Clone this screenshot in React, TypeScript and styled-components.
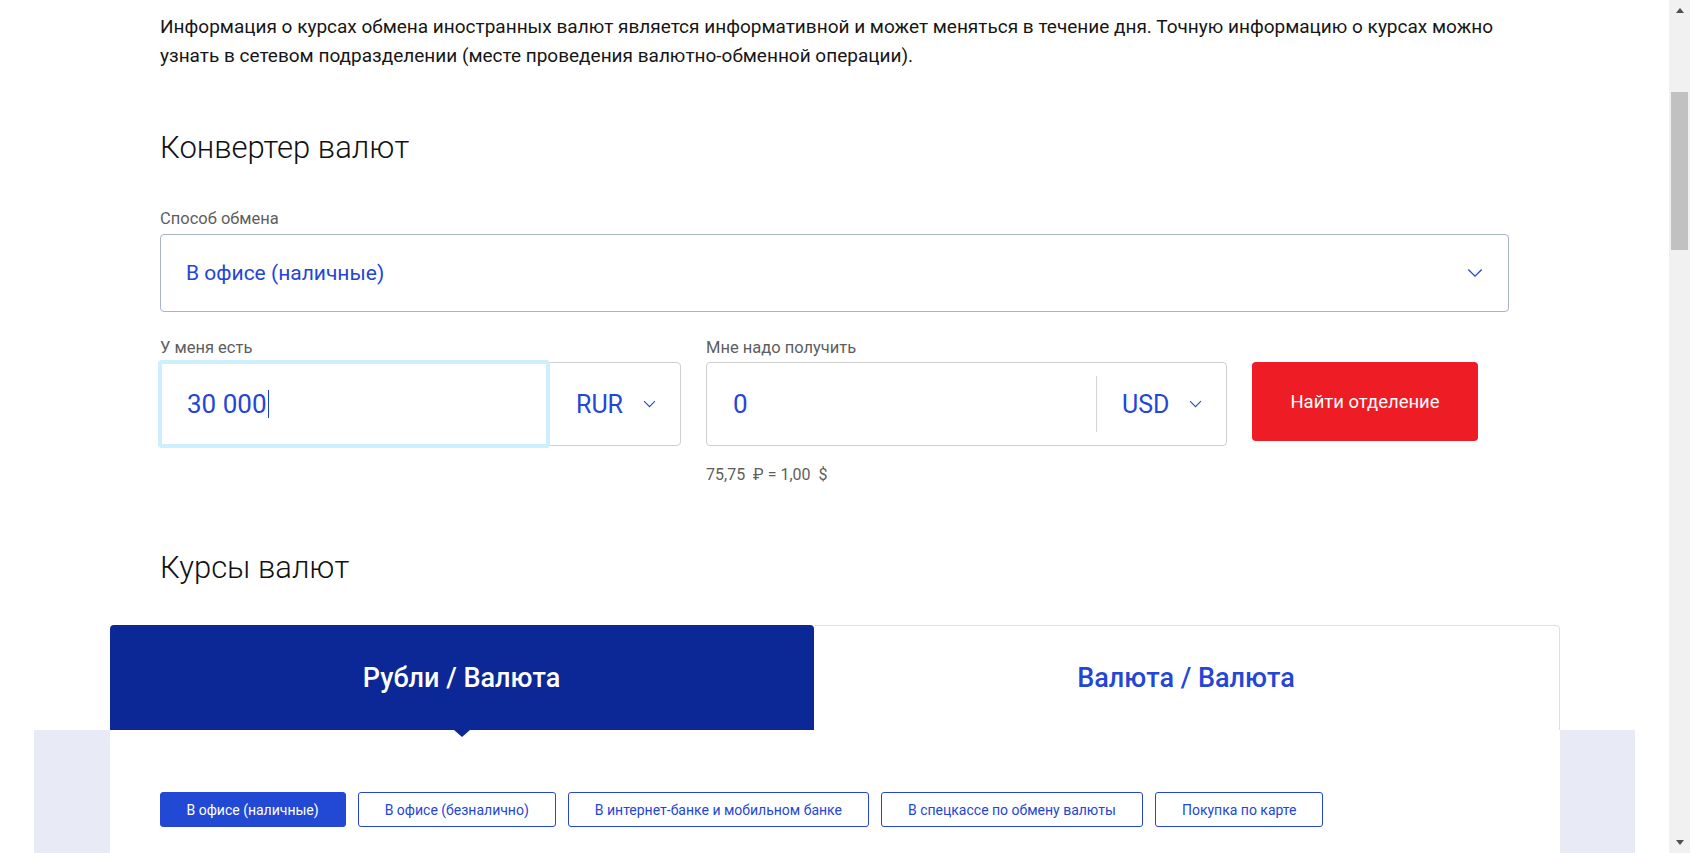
import React from "react";
import styled, { createGlobalStyle } from "styled-components";

const BLUE = "#2446d6";
const DARK_BLUE = "#0b2896";

const GlobalStyle = createGlobalStyle`
    html, body {
        margin: 0;
        padding: 0;
        background: #ffffff;
        font-family: Roboto, "Noto Sans", Arial, sans-serif;
        color: #1c1c1c;
    }
`;

const Chevron = ({ size = 16 }: { size?: number }) => (
    <svg width={size} height={size * 0.6} viewBox="0 0 16 10" fill="none">
        <path d="M1 1.5 L8 8.5 L15 1.5" stroke={BLUE} strokeWidth="1.4" />
    </svg>
);

const tabs = ["Рубли / Валюта", "Валюта / Валюта"];
const methods = [
    "В офисе (наличные)",
    "В офисе (безналично)",
    "В интернет-банке и мобильном банке",
    "В спецкассе по обмену валюты",
    "Покупка по карте",
];

const App = () => {
    return (
        <>
            <GlobalStyle />
            <Page>
                <Container>
                    <Notice>
                        Информация о курсах обмена иностранных валют является информативной и может меняться в течение
                        дня. Точную информацию о курсах можно узнать в сетевом подразделении (месте проведения
                        валютно-обменной операции).
                    </Notice>

                    <Heading>Конвертер валют</Heading>

                    <Field>
                        <Label>Способ обмена</Label>
                        <SelectBox>
                            <SelectValue>В офисе (наличные)</SelectValue>
                            <Chevron />
                        </SelectBox>
                    </Field>

                    <ConverterRow>
                        <Field>
                            <Label>У меня есть</Label>
                            <AmountGroup>
                                <AmountInput $focused>
                                    30 000
                                    <Caret />
                                </AmountInput>
                                <CurrencyPicker>
                                    RUR <Chevron size={13} />
                                </CurrencyPicker>
                            </AmountGroup>
                        </Field>

                        <Field>
                            <Label>Мне надо получить</Label>
                            <AmountGroup>
                                <AmountInput>0</AmountInput>
                                <CurrencyPicker $divider>
                                    USD <Chevron size={13} />
                                </CurrencyPicker>
                            </AmountGroup>
                            <RateHint>75,75&nbsp; ₽ = 1,00&nbsp; $</RateHint>
                        </Field>

                        <FindButton>Найти отделение</FindButton>
                    </ConverterRow>

                    <Heading $rates>Курсы валют</Heading>
                </Container>

                <RatesSection>
                    <RatesCard>
                        <TabBar>
                            {tabs.map((t, i) => (
                                <Tab key={t} $active={i === 0}>
                                    {t}
                                </Tab>
                            ))}
                        </TabBar>
                        <CardBody>
                            <MethodList>
                                {methods.map((m, i) => (
                                    <MethodButton key={m} $active={i === 0}>
                                        {m}
                                    </MethodButton>
                                ))}
                            </MethodList>
                        </CardBody>
                    </RatesCard>
                </RatesSection>
            </Page>

            <Scrollbar>
                <ScrollArrow />
                <ScrollThumb />
                <ScrollArrow $down />
            </Scrollbar>
        </>
    );
};

const Page = styled.div`
    width: calc(100% - 21px);
    padding-top: 12px;
`;

const Container = styled.div`
    width: 1349px;
    margin: 0 auto;
`;

const Notice = styled.p`
    margin: 0;
    font-size: 19px;
    line-height: 29px;
    color: #161616;
`;

const Heading = styled.h2<{ $rates?: boolean }>`
    margin: ${(p) => (p.$rates ? "64px 0 0" : "58px 0 0")};
    font-size: 31px;
    line-height: 40px;
    font-weight: 300;
    color: #111;
`;

const Field = styled.div`
    display: flex;
    flex-direction: column;
    margin-top: 41px;
`;

const Label = styled.label`
    font-size: 16.5px;
    line-height: 20px;
    color: #5e5e5e;
    margin-bottom: 5px;
`;

const SelectBox = styled.div`
    height: 76px;
    border: 1px solid #a9b4c7;
    border-radius: 4px;
    display: flex;
    align-items: center;
    justify-content: space-between;
    padding: 0 25px 0 25px;
`;

const SelectValue = styled.span`
    font-size: 21px;
    color: ${BLUE};
`;

const ConverterRow = styled.div`
    display: flex;
    align-items: flex-start;
    gap: 25px;
    margin-top: 26px;

    ${Field} {
        width: 521px;
        margin-top: 0;
    }

    ${Label} {
        margin-bottom: 4px;
    }
`;

const AmountGroup = styled.div`
    display: flex;
    height: 82px;
    border: 1px solid #cfcfcf;
    border-radius: 4px;
`;

const AmountInput = styled.div<{ $focused?: boolean }>`
    flex: 1;
    display: flex;
    align-items: center;
    padding-left: 26px;
    font-size: 26px;
    color: ${BLUE};
    border-radius: 4px;
    ${(p) =>
        p.$focused
            ? `
        border: 4px solid #cdeefd;
        margin: -3px 0 -3px -3px;
        padding-left: 25px;
    `
            : ""}
`;

const Caret = styled.span`
    display: inline-block;
    width: 1px;
    height: 28px;
    background: #1d3fd0;
    margin-left: 1px;
`;

const CurrencyPicker = styled.div<{ $divider?: boolean }>`
    box-sizing: border-box;
    width: 130px;
    display: flex;
    align-items: center;
    justify-content: space-between;
    padding: 0 24px 0 26px;
    font-size: 25px;
    color: ${BLUE};
    ${(p) =>
        p.$divider
            ? `
        position: relative;
        &::before {
            content: "";
            position: absolute;
            left: 0;
            top: 13px;
            bottom: 13px;
            width: 1px;
            background: #d4d4d4;
        }
    `
            : ""}
`;

const RateHint = styled.div`
    margin-top: 19px;
    font-size: 16px;
    line-height: 19px;
    color: #5e5e5e;
`;

const FindButton = styled.button`
    margin-top: 24px;
    width: 226px;
    height: 79px;
    border: none;
    border-radius: 4px;
    background: #ee1c25;
    color: #fff;
    font-family: inherit;
    font-size: 18.5px;
    cursor: pointer;
`;

const RatesSection = styled.section`
    width: 1601px;
    margin: 37px auto 0;
    min-height: 3600px;
    background: linear-gradient(to bottom, #fff 105px, #e8ebf5 105px);
`;

const RatesCard = styled.div`
    width: 1450px;
    margin: 0 auto;
    background: #fff;
`;

const TabBar = styled.div`
    display: grid;
    grid-template-columns: 704px 1fr;
    height: 105px;
`;

const Tab = styled.div<{ $active?: boolean }>`
    position: relative;
    display: flex;
    align-items: center;
    justify-content: center;
    font-size: 27px;
    font-weight: 500;
    color: ${(p) => (p.$active ? "#fff" : BLUE)};
    background: ${(p) => (p.$active ? DARK_BLUE : "#fff")};
    border-radius: ${(p) => (p.$active ? "4px 4px 0 0" : "0 4px 0 0")};
    border: ${(p) => (p.$active ? "none" : "1px solid #e0e0e0")};
    border-left: none;
    border-bottom: none;

    &::after {
        content: "";
        display: ${(p) => (p.$active ? "block" : "none")};
        position: absolute;
        left: 50%;
        bottom: -7px;
        transform: translateX(-50%);
        border-left: 8px solid transparent;
        border-right: 8px solid transparent;
        border-top: 7px solid ${DARK_BLUE};
    }
`;

const CardBody = styled.div`
    padding: 62px 50px 40px;
`;

const MethodList = styled.div`
    display: flex;
    gap: 12px;
`;

const MethodButton = styled.button<{ $active?: boolean }>`
    height: 35px;
    padding: 0 26px;
    border: 1px solid ${BLUE};
    border-radius: 3px;
    background: ${(p) => (p.$active ? "#2149d4" : "#fff")};
    color: ${(p) => (p.$active ? "#fff" : BLUE)};
    font-family: inherit;
    font-size: 14px;
    cursor: pointer;
`;

const Scrollbar = styled.div`
    position: fixed;
    top: 0;
    right: 0;
    width: 21px;
    height: 100vh;
    background: #f1f1f1;
    display: flex;
    flex-direction: column;
    justify-content: space-between;
`;

const ScrollThumb = styled.div`
    position: absolute;
    top: 92px;
    left: 2px;
    right: 2px;
    height: 158px;
    background: #c1c1c1;
`;

const ScrollArrow = styled.div<{ $down?: boolean }>`
    height: 21px;
    display: flex;
    align-items: center;
    justify-content: center;

    &::before {
        content: "";
        border-left: 4px solid transparent;
        border-right: 4px solid transparent;
        ${(p) => (p.$down ? "border-top: 5px solid #505050;" : "border-bottom: 5px solid #505050;")}
    }
`;

export default App;
